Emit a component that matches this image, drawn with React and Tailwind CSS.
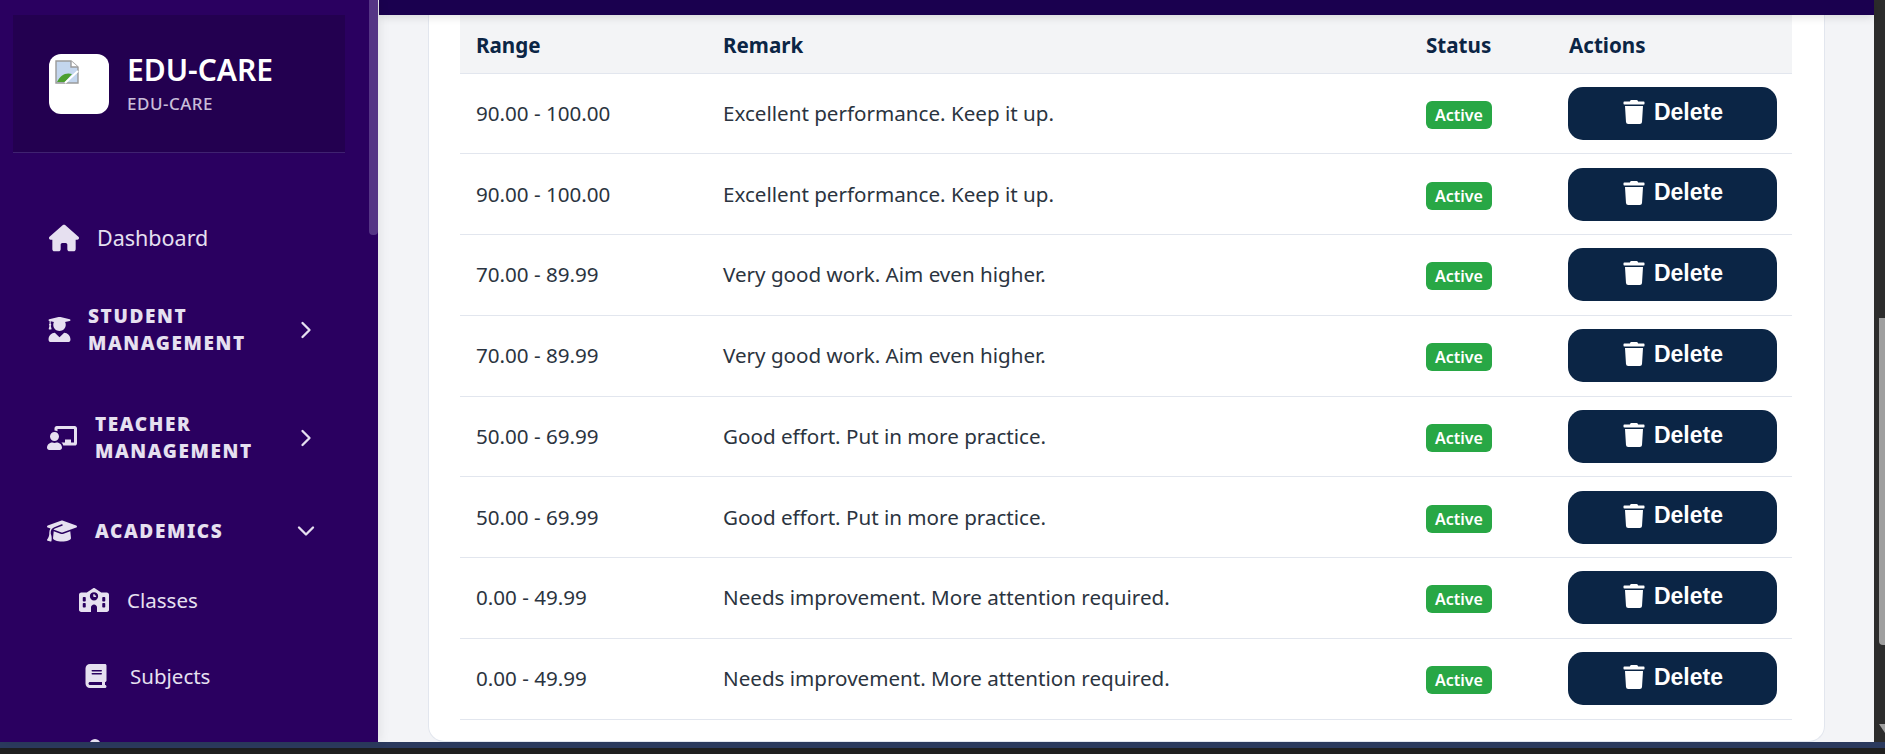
import React from "react";
import { FaUserGraduate, FaChalkboardTeacher, FaTrash } from "react-icons/fa";
import { FaHouse, FaGraduationCap, FaSchool, FaBook, FaUser } from "react-icons/fa6";
import { ChevronRight, ChevronDown } from "lucide-react";

const rows = [
  ["90.00 - 100.00", "Excellent performance. Keep it up."],
  ["90.00 - 100.00", "Excellent performance. Keep it up."],
  ["70.00 - 89.99", "Very good work. Aim even higher."],
  ["70.00 - 89.99", "Very good work. Aim even higher."],
  ["50.00 - 69.99", "Good effort. Put in more practice."],
  ["50.00 - 69.99", "Good effort. Put in more practice."],
  ["0.00 - 49.99", "Needs improvement. More attention required."],
  ["0.00 - 49.99", "Needs improvement. More attention required."],
];

function Group({ icon, lines, chevron, textClass, className }) {
  return (
    <div className={"relative flex items-center pl-[47px] text-[#e6e0f0] " + className}>
      <div className="flex w-[30px] justify-start">{icon}</div>
      <div className={"text-[19px] leading-[26.5px] font-black tracking-[1.6px] " + textClass}>
        {lines.map((l) => <div key={l}>{l}</div>)}
      </div>
      <div className="absolute top-1/2 left-[292px] -translate-y-1/2">{chevron}</div>
    </div>
  );
}

export default function App() {
  return (
    <div className="flex h-[754px] w-[1885px] flex-col overflow-hidden font-['Noto_Sans',sans-serif]">
      <div className="flex min-h-0 flex-1">
        <aside className="relative z-20 w-[378px] shrink-0 overflow-hidden bg-[#2a0060] shadow-[2px_0_10px_rgba(0,0,0,0.08)]">
          <div className="absolute top-0 right-0 h-[235px] w-[9px] rounded-b-[4px] bg-[#553585]" />
          <div className="mt-[15px] ml-[13px] flex h-[138px] w-[332px] items-center border-b border-[#3f2270] bg-[#230050] pl-[36px]">
            <div className="h-[60px] w-[60px] rounded-[12px] bg-white p-[6px]">
              <svg viewBox="0 0 24 24" className="h-[24px] w-[24px]">
                <path d="M1 1h15l7 6v16H1z" fill="#c3d6ee" stroke="#9a9a9a" strokeWidth="1.4" />
                <path d="M16 1v6h7" fill="#fff" stroke="#9a9a9a" strokeWidth="1.4" />
                <path d="M2 22c3-7 9-10 15-8l-7 8z" fill="#4c9f2f" />
                <path d="M10 23L23 11" stroke="#fff" strokeWidth="2" />
              </svg>
            </div>
            <div className="ml-[18px]">
              <div className="text-[30px] leading-[36px] font-semibold text-white">EDU-CARE</div>
              <div className="mt-[5px] text-[17px] leading-[22px] font-medium tracking-[0.5px] text-[#c9bdd9]">EDU-CARE</div>
            </div>
          </div>

          <div className="mt-[68px] flex h-[34px] items-center pl-[49px] text-[#e6e0f0]">
            <FaHouse className="text-[30px]" />
            <span className="ml-[18px] text-[21.5px]">Dashboard</span>
          </div>

          <div className="mt-[48px]">
            <Group
              icon={<FaUserGraduate className="text-[25px]" />}
              lines={["STUDENT", "MANAGEMENT"]}
              chevron={<ChevronRight size={28} strokeWidth={2} />}
              textClass="ml-[11px]"
              className="h-[53px]"
            />
          </div>
          <div className="mt-[55px]">
            <Group
              icon={<FaChalkboardTeacher className="text-[30px]" />}
              lines={["TEACHER", "MANAGEMENT"]}
              chevron={<ChevronRight size={28} strokeWidth={2} />}
              textClass="ml-[18px]"
              className="h-[53px]"
            />
          </div>
          <div className="mt-[52px]">
            <Group
              icon={<FaGraduationCap className="text-[30px]" />}
              lines={["ACADEMICS"]}
              chevron={<ChevronDown size={28} strokeWidth={2} />}
              textClass="ml-[18px]"
              className="h-[30px]"
            />
          </div>

          <div className="mt-[39px] flex h-[30px] items-center pl-[79px] text-[#e6e0f0]">
            <FaSchool className="text-[30px]" />
            <span className="ml-[18px] text-[20.5px]">Classes</span>
          </div>
          <div className="mt-[46px] flex h-[30px] items-center pl-[84px] text-[#e6e0f0]">
            <FaBook className="text-[24px]" />
            <span className="ml-[22px] text-[20.5px]">Subjects</span>
          </div>
          <div className="mt-[44px] flex h-[30px] items-center pl-[84px] text-[#e6e0f0]">
            <FaUser className="text-[22px]" />
          </div>
        </aside>

        <main className="flex min-w-0 flex-1 flex-col bg-[#f3f4f7]">
          <div className="relative z-10 ml-[1px] h-[15px] shrink-0 bg-[#1a004f] shadow-[0_2px_10px_rgba(0,0,0,0.12)]" />
          <div className="min-h-0 flex-1 pr-[49px] pl-[50px]">
            <div className="h-full rounded-b-[16px] border-x border-b border-[#e2e6ee] bg-white px-[31px]">
              <table className="w-[1332px] table-fixed border-collapse">
                <colgroup>
                  <col className="w-[247px]" />
                  <col className="w-[703px]" />
                  <col className="w-[143px]" />
                  <col className="w-[239px]" />
                </colgroup>
                <thead>
                  <tr className="h-[58px] border-b border-[#e2e6ee] bg-[#f3f4f6] text-left text-[20.6px] font-bold text-[#0b2545]">
                    <th className="pt-[3px] pl-[16px]">Range</th>
                    <th className="pt-[3px] pl-[16px]">Remark</th>
                    <th className="pt-[3px] pl-[16px]">Status</th>
                    <th className="pt-[3px] pl-[16px]">Actions</th>
                  </tr>
                </thead>
                <tbody>
                  {rows.map((r, i) => (
                    <tr key={i} className="h-[80.75px] border-b border-[#e2e6ee] text-[20.6px] text-[#2b3440]">
                      <td className="pl-[16px]">{r[0]}</td>
                      <td className="pl-[16px]">{r[1]}</td>
                      <td className="pl-[16px]">
                        <span className="inline-flex h-[28px] w-[66px] items-center justify-center rounded-[6px] bg-[#28a745] text-[16px] font-semibold text-white">Active</span>
                      </td>
                      <td className="pl-[15px]">
                        <button className="flex h-[53px] w-[209px] items-center justify-center gap-[8px] rounded-[15px] bg-[#0b2545] pb-[3px] text-[23px] font-bold text-white" style={{ fontFamily: "'Liberation Sans', Arial, sans-serif" }}>
                          <FaTrash className="text-[24px]" />
                          Delete
                        </button>
                      </td>
                    </tr>
                  ))}
                </tbody>
              </table>
            </div>
          </div>
        </main>

        <div className="relative w-[11px] shrink-0 bg-[#2c2c2c]">
          <div className="absolute top-[318px] left-[5px] h-[327px] w-[6px] rounded-bl-[4px] bg-[#9f9f9f]" />
          <svg viewBox="0 0 6 9" className="absolute top-[724px] left-[5px] h-[9px] w-[6px]">
            <path d="M0 0H6V9z" fill="#9f9f9f" />
          </svg>
        </div>
      </div>
      <div className="h-[6px] shrink-0 bg-[#2b3a5e]" />
      <div className="h-[6px] shrink-0 bg-[#1f1f1f]" />
    </div>
  );
}
